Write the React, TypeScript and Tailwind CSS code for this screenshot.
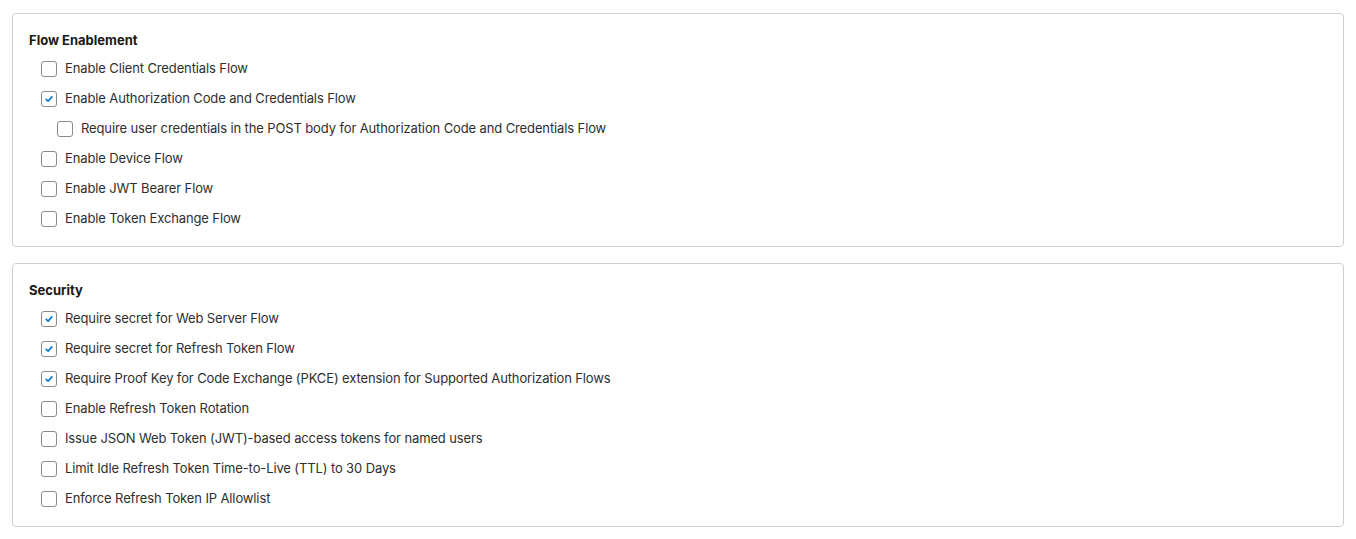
const flowItems = [
  { label: 'Enable Client Credentials Flow', checked: false },
  { label: 'Enable Authorization Code and Credentials Flow', checked: true },
  {
    label: 'Require user credentials in the POST body for Authorization Code and Credentials Flow',
    checked: false,
    indent: true,
  },
  { label: 'Enable Device Flow', checked: false },
  { label: 'Enable JWT Bearer Flow', checked: false },
  { label: 'Enable Token Exchange Flow', checked: false },
];

const securityItems = [
  { label: 'Require secret for Web Server Flow', checked: true },
  { label: 'Require secret for Refresh Token Flow', checked: true },
  {
    label: 'Require Proof Key for Code Exchange (PKCE) extension for Supported Authorization Flows',
    checked: true,
  },
  { label: 'Enable Refresh Token Rotation', checked: false },
  { label: 'Issue JSON Web Token (JWT)-based access tokens for named users', checked: false },
  { label: 'Limit Idle Refresh Token Time-to-Live (TTL) to 30 Days', checked: false },
  { label: 'Enforce Refresh Token IP Allowlist', checked: false },
];

type Item = { label: string; checked: boolean; indent?: boolean };

const CheckRow = ({ item }: { item: Item }) => (
  <label className={`flex items-center h-[30px] gap-2 ${item.indent ? 'pl-[28px]' : 'pl-[12px]'}`}>
    <span className="w-4 h-4 shrink-0 rounded-[3px] border border-[#8a8a8a] bg-white flex items-center justify-center">
      {item.checked && (
        <svg width="10" height="10" viewBox="0 0 10 10">
          <path
            d="M2.2 5.3 L4.1 7.1 L7.9 2.9"
            fill="none"
            stroke="#0176d3"
            strokeWidth="1.6"
            strokeLinecap="round"
            strokeLinejoin="round"
          />
        </svg>
      )}
    </span>
    <span className="text-[13px] text-[#2e2e2e] tracking-[-0.12px]">{item.label}</span>
  </label>
);

const Section = ({ title, items }: { title: string; items: Item[] }) => (
  <div className="border border-[#d0d0d0] rounded-[4px] pl-4 pr-4 pt-[17px] pb-[12px]">
    <h3 className="text-[13px] font-bold text-[#181818] leading-[18px] mb-[5px]">{title}</h3>
    <div className="flex flex-col">
      {items.map((item) => (
        <CheckRow key={item.label} item={item} />
      ))}
    </div>
  </div>
);

export default function App() {
  return (
    <div
      className="bg-white min-h-[539px] px-3 pt-[13px] flex flex-col gap-4"
      style={{ fontFamily: 'Inter, "Liberation Sans", Arial, sans-serif' }}
    >
      <Section title="Flow Enablement" items={flowItems} />
      <Section title="Security" items={securityItems} />
    </div>
  );
}
